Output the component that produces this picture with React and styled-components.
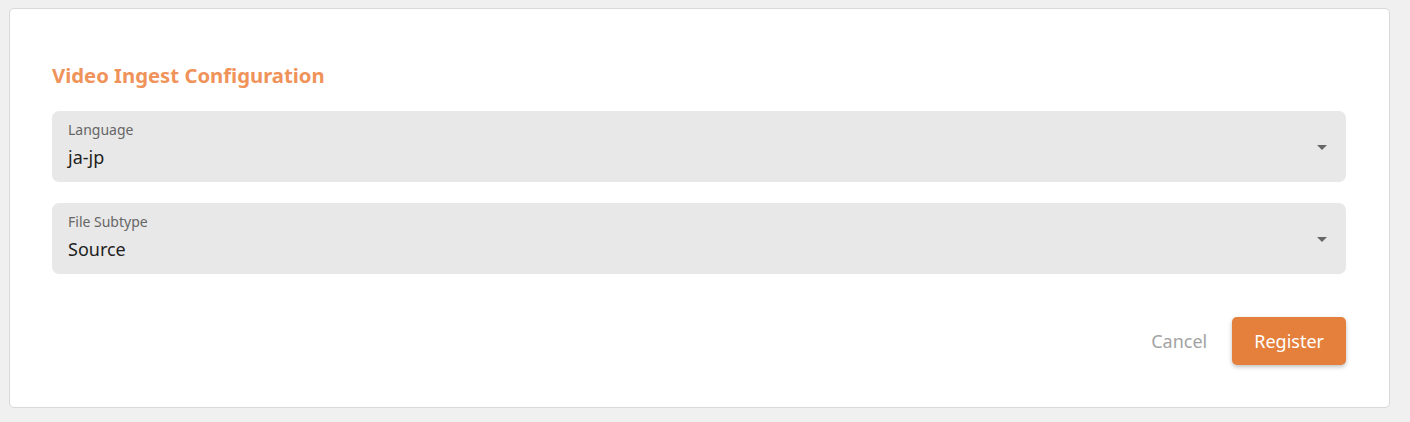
import styled, { createGlobalStyle } from "styled-components";

const GlobalStyle = createGlobalStyle`
  body {
    margin: 0;
    background: #f0f0f0;
    font-family: "Noto Sans", "Open Sans", sans-serif;
  }
`;

const fields = [
  { label: "Language", value: "ja-jp" },
  { label: "File Subtype", value: "Source" },
];

export default function App() {
  return (
    <>
      <GlobalStyle />
      <Page>
        <Card>
          <Title>Video Ingest Configuration</Title>
          <Fields>
            {fields.map((f) => (
              <Select key={f.label}>
                <SelectText>
                  <Label>{f.label}</Label>
                  <Value>{f.value}</Value>
                </SelectText>
                <Arrow />
              </Select>
            ))}
          </Fields>
          <Actions>
            <TextButton>Cancel</TextButton>
            <PrimaryButton>Register</PrimaryButton>
          </Actions>
        </Card>
      </Page>
    </>
  );
}

const Page = styled.div`
  padding: 8px 20px 14px 9px;
`;

const Card = styled.div`
  background: #fff;
  border: 1px solid #d9d9d9;
  border-radius: 5px;
  padding: 51px 43px 42px 42px;
  display: flex;
  flex-direction: column;
  box-sizing: border-box;
  height: 400px;
`;

const Title = styled.h2`
  margin: 0;
  font-size: 20.3px;
  line-height: 30px;
  font-weight: 700;
  color: #ef935a;
`;

const Fields = styled.div`
  display: flex;
  flex-direction: column;
  gap: 21px;
  margin-top: 21px;
`;

const Select = styled.div`
  height: 71px;
  background: #e8e8e8;
  border-radius: 7px;
  display: flex;
  align-items: center;
  justify-content: space-between;
  padding: 0 19px 0 16px;
  box-sizing: border-box;
`;

const SelectText = styled.div`
  align-self: flex-start;
  display: flex;
  flex-direction: column;
  gap: 6px;
  padding-top: 10px;
`;

const Label = styled.span`
  font-size: 14px;
  line-height: 18px;
  color: #666;
`;

const Value = styled.span`
  font-size: 18px;
  line-height: 24px;
  color: #1f1f1f;
`;

const Arrow = styled.span`
  width: 0;
  height: 0;
  border-left: 5px solid transparent;
  border-right: 5px solid transparent;
  border-top: 5px solid #666;
  margin-top: 1px;
`;

const Actions = styled.div`
  display: flex;
  justify-content: flex-end;
  align-items: center;
  gap: 25px;
  margin-top: 43px;
`;

const TextButton = styled.button`
  border: none;
  background: none;
  padding: 0;
  font-family: inherit;
  font-size: 18px;
  color: #a3a3a3;
  cursor: pointer;
`;

const PrimaryButton = styled.button`
  border: none;
  height: 48px;
  padding: 0 22px;
  border-radius: 5px;
  background: #e57f3c;
  color: #fff;
  font-family: inherit;
  font-size: 18px;
  box-shadow: 0 2px 4px rgba(0, 0, 0, 0.25);
  cursor: pointer;
`;
